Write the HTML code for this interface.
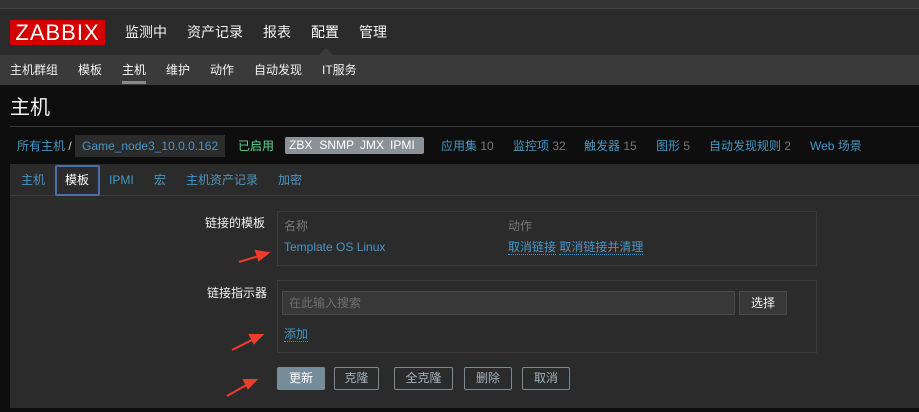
<!DOCTYPE html>
<html><head><meta charset="utf-8"><style>
*{margin:0;padding:0;box-sizing:border-box}
body{width:919px;height:412px;overflow:hidden;background:#0e0e0e;font-family:"Liberation Sans","Noto Sans CJK SC",sans-serif;font-size:12px;color:#f2f2f2;position:relative}
.a{position:absolute;white-space:nowrap;line-height:16px}
.blue{color:#4796c4}
.g{color:#787878}
.btn{position:absolute;height:23px;border:1px solid #768d99;color:#a0b2bc;font-size:12px;text-align:center;line-height:21px;border-radius:2px}
.link{border-bottom:1px dotted #4796c4}
</style></head><body>
<div class="a" style="left:0;top:0;width:919px;height:9px;background:#333;border-bottom:1px solid #444"></div>
<div class="a" style="left:0;top:9px;width:919px;height:46px;background:#2b2b2b"></div>
<div class="a" style="left:10px;top:20px;width:95px;height:25px;background:#d40000;color:#fff;font-size:22px;line-height:25px;text-align:center;letter-spacing:1px">ZABBIX</div>
<div class="a" style="left:125px;top:24px;font-size:14px;color:#f2f2f2">监测中</div>
<div class="a" style="left:187px;top:24px;font-size:14px">资产记录</div>
<div class="a" style="left:263px;top:24px;font-size:14px">报表</div>
<div class="a" style="left:311px;top:24px;font-size:14px;color:#fff">配置</div>
<div class="a" style="left:359px;top:24px;font-size:14px">管理</div>
<div class="a" style="left:319px;top:48px;width:0;height:0;border-left:7px solid transparent;border-right:7px solid transparent;border-bottom:7px solid #3a3a3a"></div>
<div class="a" style="left:0;top:55px;width:919px;height:30px;background:#3a3a3a"></div>
<div class="a" style="left:10px;top:62px;font-size:12px">主机群组</div>
<div class="a" style="left:78px;top:62px">模板</div>
<div class="a" style="left:122px;top:62px;color:#fff">主机</div>
<div class="a" style="left:122px;top:81px;width:24px;height:3px;background:#888"></div>
<div class="a" style="left:166px;top:62px">维护</div>
<div class="a" style="left:210px;top:62px">动作</div>
<div class="a" style="left:254px;top:62px">自动发现</div>
<div class="a" style="left:322px;top:62px">IT服务</div>
<div class="a" style="left:10px;top:96px;font-size:20px;line-height:24px;color:#f2f2f2">主机</div>
<div class="a" style="left:10px;top:126px;width:909px;height:1px;background:#383838"></div>
<div class="a blue" style="left:17px;top:138px">所有主机 <span style="color:#ccc">/</span></div>
<div class="a blue" style="left:75px;top:135px;width:150px;height:22px;background:#2b2b2b;line-height:22px;padding-left:7px">Game_node3_10.0.0.162</div>
<div class="a" style="left:238px;top:138px;color:#59db8f">已启用</div>
<div class="a" style="left:285px;top:137px;width:139px;height:17px;background:#8a9297;border-radius:2px;color:#fff;line-height:17px;font-size:12px"><span style="padding:0 4px">ZBX</span><span style="padding:0 3px">SNMP</span><span style="padding:0 3px">JMX</span><span style="padding:0 3px">IPMI</span></div>
<div class="a blue" style="left:441px;top:138px">应用集 <span class="g">10</span></div>
<div class="a blue" style="left:513px;top:138px">监控项 <span class="g">32</span></div>
<div class="a blue" style="left:584px;top:138px">触发器 <span class="g">15</span></div>
<div class="a blue" style="left:656px;top:138px">图形 <span class="g">5</span></div>
<div class="a blue" style="left:709px;top:138px">自动发现规则 <span class="g">2</span></div>
<div class="a blue" style="left:810px;top:138px">Web 场景</div>
<div class="a" style="left:10px;top:164px;width:909px;height:244px;background:#2b2b2b"></div>
<div class="a" style="left:10px;top:195px;width:909px;height:1px;background:#3c3c3c"></div>
<div class="a blue" style="left:21px;top:172px">主机</div>
<div class="a" style="left:55px;top:165px;width:45px;height:31px;border:2px solid #4a6fa5;border-radius:2px"></div>
<div class="a" style="left:65px;top:172px;color:#fff">模板</div>
<div class="a blue" style="left:109px;top:172px">IPMI</div>
<div class="a blue" style="left:154px;top:172px">宏</div>
<div class="a blue" style="left:186px;top:172px">主机资产记录</div>
<div class="a blue" style="left:278px;top:172px">加密</div>
<div class="a" style="left:205px;top:215px;color:#f2f2f2">链接的模板</div>
<div class="a" style="left:277px;top:211px;width:540px;height:55px;border:1px solid #3b3b3b"></div>
<div class="a g" style="left:284px;top:218px">名称</div>
<div class="a g" style="left:508px;top:218px">动作</div>
<div class="a blue" style="left:284px;top:239px">Template OS Linux</div>
<div class="a blue" style="left:508px;top:239px"><span class="link">取消链接</span> <span class="link">取消链接并清理</span></div>
<div class="a" style="left:207px;top:285px">链接指示器</div>
<div class="a" style="left:277px;top:280px;width:540px;height:73px;border:1px solid #3b3b3b"></div>
<div class="a" style="left:282px;top:291px;width:453px;height:24px;background:#383838;border:1px solid #4a4a4a;color:#6f6f6f;line-height:22px;padding-left:6px">在此输入搜索</div>
<div class="a" style="left:739px;top:291px;width:48px;height:24px;background:#383838;border:1px solid #4a4a4a;text-align:center;line-height:22px;color:#f2f2f2">选择</div>
<div class="a blue" style="left:284px;top:326px"><span class="link">添加</span></div>
<div class="btn" style="left:277px;top:367px;width:48px;background:#768d99;color:#fff">更新</div>
<div class="btn" style="left:334px;top:367px;width:45px">克隆</div>
<div class="btn" style="left:394px;top:367px;width:59px">全克隆</div>
<div class="btn" style="left:464px;top:367px;width:48px">删除</div>
<div class="btn" style="left:522px;top:367px;width:48px">取消</div>
<svg class="a" style="left:0;top:0" width="919" height="412">
<g stroke="#f03c2c" stroke-width="2" fill="#f03c2c">
<line x1="239" y1="262" x2="262" y2="255"/><polygon points="268,253 256,251 259,260"/>
<line x1="232" y1="350" x2="256" y2="338"/><polygon points="262,335 250,335 254,343"/>
<line x1="227" y1="396" x2="250" y2="383"/><polygon points="256,380 244,380 248,388"/>
</g></svg>
</body></html>
